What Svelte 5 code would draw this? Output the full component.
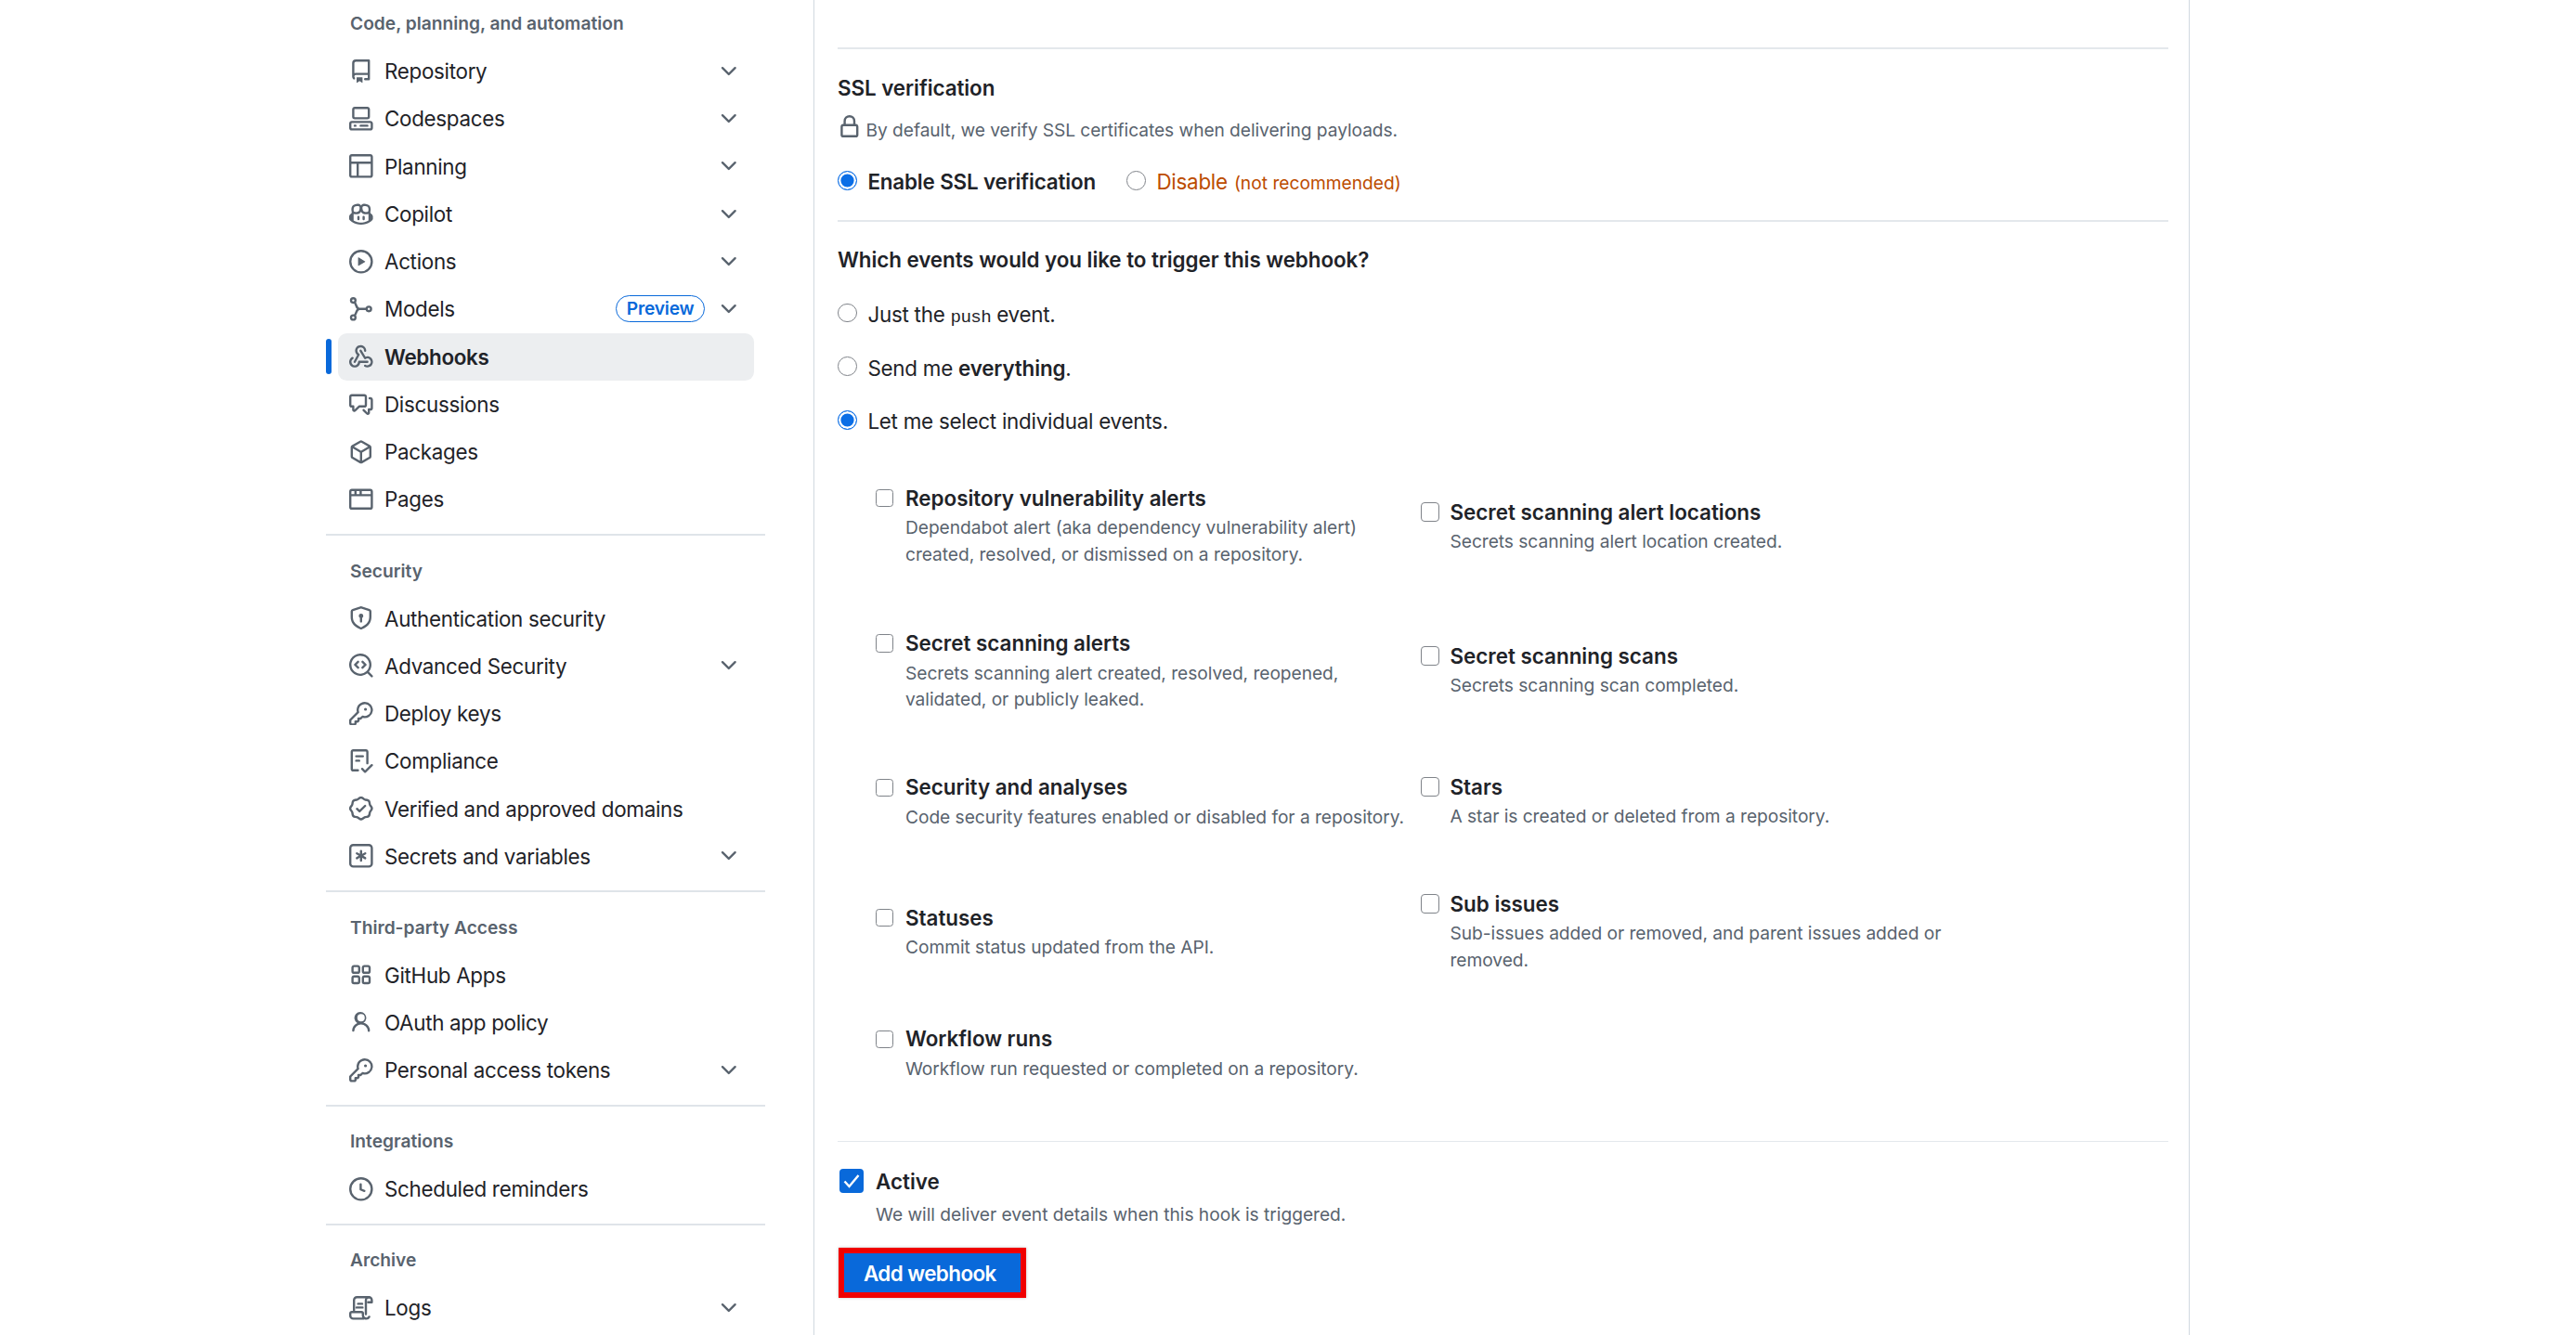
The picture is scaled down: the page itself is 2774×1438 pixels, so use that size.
<script>
  const chevron = 'M12.78 5.22a.749.749 0 0 1 0 1.06l-4.25 4.25a.749.749 0 0 1-1.06 0L3.22 6.28a.749.749 0 1 1 1.06-1.06L8 8.939l3.72-3.719a.749.749 0 0 1 1.06 0Z';
  const key = 'M10.5 0a5.499 5.499 0 1 1-1.288 10.848l-.932.932a.749.749 0 0 1-.53.22H7v.75a.749.749 0 0 1-.22.53l-.5.5a.749.749 0 0 1-.53.22H5v.75a.749.749 0 0 1-.22.53l-.5.5a.749.749 0 0 1-.53.22h-2A1.75 1.75 0 0 1 0 14.25v-2c0-.199.079-.389.22-.53l4.932-4.932A5.5 5.5 0 0 1 10.5 0Zm-4 5.5c-.001.431.069.86.205 1.269a.75.75 0 0 1-.181.768L1.5 12.56v1.69c0 .138.112.25.25.25h1.69l.06-.06v-1.19a.75.75 0 0 1 .75-.75h1.19l.06-.06v-1.19a.75.75 0 0 1 .75-.75h1.19l1.023-1.025a.75.75 0 0 1 .768-.18A4 4 0 1 0 6.5 5.5ZM11 6a1 1 0 1 1 0-2 1 1 0 0 1 0 2Z';
  const lock = 'M4 4a4 4 0 0 1 8 0v2h.25c.966 0 1.75.784 1.75 1.75v5.5A1.75 1.75 0 0 1 12.25 15h-8.5A1.75 1.75 0 0 1 2 13.25v-5.5C2 6.784 2.784 6 3.75 6H4Zm8.25 3.5h-8.5a.25.25 0 0 0-.25.25v5.5c0 .138.112.25.25.25h8.5a.25.25 0 0 0 .25-.25v-5.5a.25.25 0 0 0-.25-.25ZM10.5 6V4a2.5 2.5 0 1 0-5 0v2Z';

  const icons = {
    repo: 'M2 2.5A2.5 2.5 0 0 1 4.5 0h8.75a.75.75 0 0 1 .75.75v12.5a.75.75 0 0 1-.75.75h-2.5a.75.75 0 0 1 0-1.5h1.75v-2h-8a1 1 0 0 0-.714 1.7.75.75 0 1 1-1.072 1.05A2.495 2.495 0 0 1 2 11.5Zm10.5-1h-8a1 1 0 0 0-1 1v6.708A2.486 2.486 0 0 1 4.5 9h8ZM5 12.25a.25.25 0 0 1 .25-.25h3.5a.25.25 0 0 1 .25.25v3.25a.25.25 0 0 1-.4.2l-1.45-1.087a.249.249 0 0 0-.3 0L5.4 15.7a.25.25 0 0 1-.4-.2Z',
    codespaces: 'M0 11.25c0-.966.784-1.75 1.75-1.75h12.5c.966 0 1.75.784 1.75 1.75v3A1.75 1.75 0 0 1 14.25 16H1.75A1.75 1.75 0 0 1 0 14.25Zm2-9.5C2 .784 2.784 0 3.75 0h8.5C13.216 0 14 .784 14 1.75v5a1.75 1.75 0 0 1-1.75 1.75h-8.5A1.75 1.75 0 0 1 2 6.75Zm1.75-.25a.25.25 0 0 0-.25.25v5c0 .138.112.25.25.25h8.5a.25.25 0 0 0 .25-.25v-5a.25.25 0 0 0-.25-.25Zm-2 9.5a.25.25 0 0 0-.25.25v3c0 .138.112.25.25.25h12.5a.25.25 0 0 0 .25-.25v-3a.25.25 0 0 0-.25-.25ZM7 12.75a.75.75 0 0 1 .75-.75h4.5a.75.75 0 0 1 0 1.5h-4.5a.75.75 0 0 1-.75-.75Zm-4 0a.75.75 0 0 1 .75-.75h.5a.75.75 0 0 1 0 1.5h-.5a.75.75 0 0 1-.75-.75Z',
    table: 'M0 1.75C0 .784.784 0 1.75 0h12.5C15.217 0 16 .784 16 1.75v12.5A1.75 1.75 0 0 1 14.25 16H1.75A1.75 1.75 0 0 1 0 14.25ZM6.5 6.5v8h7.75a.25.25 0 0 0 .25-.25V6.5Zm8-1.5V1.75a.25.25 0 0 0-.25-.25H1.75a.25.25 0 0 0-.25.25V5Zm-13 1.5v7.75c0 .138.112.25.25.25H5v-8Z',
    copilot: 'M7.998 15.035c-4.562 0-7.873-2.914-7.998-3.749V9.338c.085-.628.677-1.686 1.588-2.065.013-.07.024-.143.036-.218.029-.183.06-.384.126-.612-.201-.508-.254-1.084-.254-1.656 0-.87.128-1.769.693-2.484.579-.733 1.494-1.124 2.724-1.261 1.206-.134 2.262.034 2.944.765.05.053.096.108.139.165.044-.057.094-.112.143-.165.682-.731 1.738-.899 2.944-.765 1.23.137 2.145.528 2.724 1.261.566.715.693 1.614.693 2.484 0 .572-.053 1.148-.254 1.656.066.228.098.429.126.612.012.076.024.148.037.218.924.385 1.522 1.471 1.591 2.095v1.872c0 .766-3.351 3.795-8.002 3.795Zm0-1.485c2.28 0 4.584-1.11 5.002-1.433V7.862l-.023-.116c-.49.21-1.075.291-1.727.291-1.146 0-2.059-.327-2.71-.991A3.222 3.222 0 0 1 8 6.303a3.24 3.24 0 0 1-.544.743c-.65.664-1.563.991-2.71.991-.652 0-1.236-.081-1.727-.291l-.023.116v4.255c.419.323 2.722 1.433 5.002 1.433ZM6.762 2.83c-.193-.206-.637-.413-1.682-.297-1.019.113-1.479.404-1.713.7-.247.312-.369.789-.369 1.554 0 .793.129 1.171.308 1.371.162.181.519.379 1.442.379.853 0 1.339-.235 1.638-.54.315-.322.527-.827.617-1.553.117-.935-.037-1.395-.241-1.614Zm4.155-.297c-1.044-.116-1.488.091-1.681.297-.204.219-.359.679-.242 1.614.091.726.303 1.231.618 1.553.299.305.784.54 1.638.54.922 0 1.28-.198 1.442-.379.179-.2.308-.578.308-1.371 0-.765-.123-1.242-.37-1.554-.233-.296-.693-.587-1.713-.7ZM6.25 9.037a.75.75 0 0 1 .75.75v1.501a.75.75 0 0 1-1.5 0V9.787a.75.75 0 0 1 .75-.75Zm4.25.75v1.501a.75.75 0 0 1-1.5 0V9.787a.75.75 0 0 1 1.5 0Z',
    play: 'M8 0a8 8 0 1 1 0 16A8 8 0 0 1 8 0ZM1.5 8a6.5 6.5 0 1 0 13 0 6.5 6.5 0 0 0-13 0Zm4.879-2.773 4.264 2.559a.25.25 0 0 1 0 .428l-4.264 2.559A.25.25 0 0 1 6 10.559V5.442a.25.25 0 0 1 .379-.215Z',
    webhook: 'M5.5 4.25a2.25 2.25 0 0 1 4.5 0 .75.75 0 0 0 1.5 0 3.75 3.75 0 1 0-6.14 2.889l-2.272 4.258a.75.75 0 0 0 1.324.706L7 7.25a.75.75 0 0 0-.309-1.015A2.25 2.25 0 0 1 5.5 4.25ZM7.364 3.607a.75.75 0 0 1 1.03.257l2.608 4.349a3.75 3.75 0 1 1-.628 6.785.75.75 0 0 1 .752-1.299 2.25 2.25 0 1 0-.033-3.88.75.75 0 0 1-1.03-.256L7.107 4.636a.75.75 0 0 1 .257-1.03ZM2.9 8.776A.75.75 0 0 1 2.625 9.8 2.25 2.25 0 1 0 6 11.75a.75.75 0 0 1 .75-.751h5.5a.75.75 0 0 1 0 1.5H7.425a3.751 3.751 0 1 1-5.55-3.998.75.75 0 0 1 1.024.274Z',
    discussion: 'M1.75 1h8.5c.966 0 1.75.784 1.75 1.75v5.5A1.75 1.75 0 0 1 10.25 10H7.061l-2.574 2.573A1.458 1.458 0 0 1 2 11.543V10h-.25A1.75 1.75 0 0 1 0 8.25v-5.5C0 1.784.784 1 1.75 1ZM1.5 2.75v5.5c0 .138.112.25.25.25h1a.75.75 0 0 1 .75.75v2.19l2.72-2.72a.749.749 0 0 1 .53-.22h3.5a.25.25 0 0 0 .25-.25v-5.5a.25.25 0 0 0-.25-.25h-8.5a.25.25 0 0 0-.25.25Zm13 2a.25.25 0 0 0-.25-.25h-.5a.75.75 0 0 1 0-1.5h.5c.966 0 1.75.784 1.75 1.75v5.5A1.75 1.75 0 0 1 14.25 12H14v1.543a1.458 1.458 0 0 1-2.487 1.03L9.22 12.28a.749.749 0 0 1 .326-1.275.749.749 0 0 1 .734.215l2.22 2.22v-2.19a.75.75 0 0 1 .75-.75h1a.25.25 0 0 0 .25-.25Z',
    pkg: 'm8.878.392 5.25 3.045c.54.314.872.89.872 1.514v6.098a1.75 1.75 0 0 1-.872 1.514l-5.25 3.045a1.75 1.75 0 0 1-1.756 0l-5.25-3.045A1.75 1.75 0 0 1 1 11.049V4.951c0-.624.332-1.201.872-1.514L7.122.392a1.75 1.75 0 0 1 1.756 0ZM7.875 1.69l-4.63 2.685L8 7.133l4.755-2.758-4.63-2.685a.248.248 0 0 0-.25 0ZM2.5 5.677v5.372c0 .09.047.171.125.216l4.625 2.683V8.432Zm6.25 8.271 4.625-2.683a.25.25 0 0 0 .125-.216V5.677L8.75 8.432Z',
    browser: 'M0 2.75C0 1.784.784 1 1.75 1h12.5c.966 0 1.75.784 1.75 1.75v10.5A1.75 1.75 0 0 1 14.25 15H1.75A1.75 1.75 0 0 1 0 13.25ZM14.5 6h-13v7.25c0 .138.112.25.25.25h12.5a.25.25 0 0 0 .25-.25Zm-6-3.5v2h6V2.75a.25.25 0 0 0-.25-.25ZM5 2.5v2h2v-2Zm-3.25 0a.25.25 0 0 0-.25.25V4.5h2v-2Z',
    shield: 'm8.533.133 5.25 1.68A1.75 1.75 0 0 1 15 3.48V7c0 1.566-.32 3.182-1.303 4.682-.983 1.498-2.585 2.813-5.032 3.855a1.697 1.697 0 0 1-1.33 0c-2.447-1.042-4.049-2.357-5.032-3.855C1.32 10.182 1 8.566 1 7V3.48a1.75 1.75 0 0 1 1.217-1.667l5.25-1.68a1.748 1.748 0 0 1 1.066 0Zm-.61 1.429.001.001-5.25 1.68a.251.251 0 0 0-.174.237V7c0 1.36.275 2.666 1.057 3.859.784 1.194 2.121 2.342 4.366 3.298a.196.196 0 0 0 .154 0c2.245-.957 3.582-2.103 4.366-3.297C13.225 9.666 13.5 8.358 13.5 7V3.48a.25.25 0 0 0-.174-.238l-5.25-1.68a.25.25 0 0 0-.153 0ZM9.5 6.5c0 .536-.286 1.032-.75 1.3v2.45a.75.75 0 0 1-1.5 0V7.8A1.5 1.5 0 1 1 9.5 6.5Z',
    codescan: 'M8.47 4.97a.75.75 0 0 0 0 1.06L9.94 7.5 8.47 8.97a.75.75 0 1 0 1.06 1.06l2-2a.75.75 0 0 0 0-1.06l-2-2a.75.75 0 0 0-1.06 0ZM6.53 6.03a.75.75 0 0 0-1.06-1.06l-2 2a.75.75 0 0 0 0 1.06l2 2a.75.75 0 1 0 1.06-1.06L5.06 7.5l1.47-1.47ZM12.246 13.307a7.501 7.501 0 1 1 1.06-1.06l2.474 2.473a.749.749 0 0 1-.326 1.275.749.749 0 0 1-.734-.215ZM1.5 7.5a6.002 6.002 0 0 0 3.608 5.504 6.002 6.002 0 0 0 6.486-1.117.748.748 0 0 1 .292-.293A6 6 0 1 0 1.5 7.5Z',
    key,
    checklist: 'M2.5 1.75v11.5c0 .138.112.25.25.25h3.17a.75.75 0 0 1 0 1.5H2.75A1.75 1.75 0 0 1 1 13.25V1.75C1 .784 1.784 0 2.75 0h8.5C12.216 0 13 .784 13 1.75v7.736a.75.75 0 0 1-1.5 0V1.75a.25.25 0 0 0-.25-.25h-8.5a.25.25 0 0 0-.25.25Zm13.274 9.537v-.001l-4.557 4.45a.75.75 0 0 1-1.055-.008l-1.943-1.95a.75.75 0 0 1 1.062-1.058l1.419 1.425 4.026-3.932a.75.75 0 1 1 1.048 1.074ZM4.75 4h4.5a.75.75 0 0 1 0 1.5h-4.5a.75.75 0 0 1 0-1.5ZM4 7.75A.75.75 0 0 1 4.75 7h2a.75.75 0 0 1 0 1.5h-2A.75.75 0 0 1 4 7.75Z',
    verified: 'm9.585.52.929.68c.153.112.331.186.518.215l1.138.175a2.678 2.678 0 0 1 2.24 2.24l.174 1.139c.029.187.103.365.215.518l.68.928a2.677 2.677 0 0 1 0 3.17l-.68.928a1.174 1.174 0 0 0-.215.518l-.175 1.138a2.678 2.678 0 0 1-2.241 2.241l-1.138.175a1.17 1.17 0 0 0-.518.215l-.928.68a2.677 2.677 0 0 1-3.17 0l-.928-.68a1.174 1.174 0 0 0-.518-.215L3.83 14.41a2.678 2.678 0 0 1-2.24-2.24l-.175-1.138a1.17 1.17 0 0 0-.215-.518l-.68-.928a2.677 2.677 0 0 1 0-3.17l.68-.928c.112-.153.186-.331.215-.518l.175-1.14a2.678 2.678 0 0 1 2.24-2.24l1.139-.175c.187-.029.365-.103.518-.215l.928-.68a2.677 2.677 0 0 1 3.17 0ZM7.303 1.728l-.927.68a2.67 2.67 0 0 1-1.18.489l-1.137.174a1.179 1.179 0 0 0-.987.987l-.174 1.136a2.677 2.677 0 0 1-.489 1.18l-.68.928a1.18 1.18 0 0 0 0 1.394l.68.927c.256.348.424.753.489 1.18l.174 1.137c.078.509.478.909.987.987l1.136.174a2.67 2.67 0 0 1 1.18.489l.928.68c.414.305.979.305 1.394 0l.927-.68a2.67 2.67 0 0 1 1.18-.489l1.137-.174a1.18 1.18 0 0 0 .987-.987l.174-1.136a2.67 2.67 0 0 1 .489-1.18l.68-.928a1.176 1.176 0 0 0 0-1.394l-.68-.927a2.686 2.686 0 0 1-.489-1.18l-.174-1.137a1.179 1.179 0 0 0-.987-.987l-1.136-.174a2.677 2.677 0 0 1-1.18-.489l-.928-.68a1.176 1.176 0 0 0-1.394 0ZM11.28 6.78l-3.75 3.75a.75.75 0 0 1-1.06 0L4.72 8.78a.751.751 0 0 1 .018-1.042.751.751 0 0 1 1.042-.018L7 8.94l3.22-3.22a.751.751 0 0 1 1.042.018.751.751 0 0 1 .018 1.042Z',
    asterisk: 'M0 2.75A2.75 2.75 0 0 1 2.75 0h10.5A2.75 2.75 0 0 1 16 2.75v10.5A2.75 2.75 0 0 1 13.25 16H2.75A2.75 2.75 0 0 1 0 13.25ZM2.75 1.5c-.69 0-1.25.56-1.25 1.25v10.5c0 .69.56 1.25 1.25 1.25h10.5c.69 0 1.25-.56 1.25-1.25V2.75c0-.69-.56-1.25-1.25-1.25ZM8 4a.75.75 0 0 1 .75.75V6.7l1.69-.975a.75.75 0 0 1 .75 1.3L9.5 8l1.69.976a.75.75 0 0 1-.75 1.298L8.75 9.3v1.951a.75.75 0 0 1-1.5 0V9.299l-1.69.976a.75.75 0 0 1-.75-1.3L6.5 8l-1.69-.975a.75.75 0 0 1 .75-1.3l1.69.976V4.75A.75.75 0 0 1 8 4Z',
    apps: 'M1.5 3.25c0-.966.784-1.75 1.75-1.75h2.5c.966 0 1.75.784 1.75 1.75v2.5A1.75 1.75 0 0 1 5.75 7.5h-2.5A1.75 1.75 0 0 1 1.5 5.75Zm7 0c0-.966.784-1.75 1.75-1.75h2.5c.966 0 1.75.784 1.75 1.75v2.5a1.75 1.75 0 0 1-1.75 1.75h-2.5A1.75 1.75 0 0 1 8.5 5.75Zm-7 7c0-.966.784-1.75 1.75-1.75h2.5c.966 0 1.75.784 1.75 1.75v2.5a1.75 1.75 0 0 1-1.75 1.75h-2.5a1.75 1.75 0 0 1-1.75-1.75Zm7 0c0-.966.784-1.75 1.75-1.75h2.5c.966 0 1.75.784 1.75 1.75v2.5a1.75 1.75 0 0 1-1.75 1.75h-2.5a1.75 1.75 0 0 1-1.75-1.75ZM3.25 3a.25.25 0 0 0-.25.25v2.5c0 .138.112.25.25.25h2.5A.25.25 0 0 0 6 5.75v-2.5A.25.25 0 0 0 5.75 3Zm7 0a.25.25 0 0 0-.25.25v2.5c0 .138.112.25.25.25h2.5a.25.25 0 0 0 .25-.25v-2.5a.25.25 0 0 0-.25-.25Zm-7 7a.25.25 0 0 0-.25.25v2.5c0 .138.112.25.25.25h2.5a.25.25 0 0 0 .25-.25v-2.5a.25.25 0 0 0-.25-.25Zm7 0a.25.25 0 0 0-.25.25v2.5c0 .138.112.25.25.25h2.5a.25.25 0 0 0 .25-.25v-2.5a.25.25 0 0 0-.25-.25Z',
    person: 'M10.561 8.073a6.005 6.005 0 0 1 3.432 5.142.75.75 0 1 1-1.498.07 4.5 4.5 0 0 0-8.99 0 .75.75 0 0 1-1.498-.07 6.004 6.004 0 0 1 3.431-5.142 3.999 3.999 0 1 1 4.123 0ZM10.5 4.5a2.5 2.5 0 1 0-5 0 2.5 2.5 0 0 0 5 0Z',
    clock: 'M8 0a8 8 0 1 1 0 16A8 8 0 0 1 8 0ZM1.5 8a6.5 6.5 0 1 0 13 0 6.5 6.5 0 0 0-13 0Zm7-3.25v2.992l2.028.812a.75.75 0 0 1-.557 1.392l-2.5-1A.751.751 0 0 1 7 8.25v-3.5a.75.75 0 0 1 1.5 0Z',
  };

  const groups = [
    { title: 'Code, planning, and automation', items: [
      { label: 'Repository', icon: 'repo', more: true },
      { label: 'Codespaces', icon: 'codespaces', more: true },
      { label: 'Planning', icon: 'table', more: true },
      { label: 'Copilot', icon: 'copilot', more: true },
      { label: 'Actions', icon: 'play', more: true },
      { label: 'Models', icon: 'models', more: true, preview: true },
      { label: 'Webhooks', icon: 'webhook', active: true },
      { label: 'Discussions', icon: 'discussion' },
      { label: 'Packages', icon: 'pkg' },
      { label: 'Pages', icon: 'browser' },
    ] },
    { title: 'Security', items: [
      { label: 'Authentication security', icon: 'shield' },
      { label: 'Advanced Security', icon: 'codescan', more: true },
      { label: 'Deploy keys', icon: 'key' },
      { label: 'Compliance', icon: 'checklist' },
      { label: 'Verified and approved domains', icon: 'verified' },
      { label: 'Secrets and variables', icon: 'asterisk', more: true },
    ] },
    { title: 'Third-party Access', items: [
      { label: 'GitHub Apps', icon: 'apps' },
      { label: 'OAuth app policy', icon: 'person' },
      { label: 'Personal access tokens', icon: 'key', more: true },
    ] },
    { title: 'Integrations', items: [
      { label: 'Scheduled reminders', icon: 'clock' },
    ] },
    { title: 'Archive', items: [
      { label: 'Logs', icon: 'log', more: true },
    ] },
  ];

  const leftEvents = [
    { top: 0, title: 'Repository vulnerability alerts', desc: 'Dependabot alert (aka dependency vulnerability alert)\ncreated, resolved, or dismissed on a repository.' },
    { top: 65, title: 'Secret scanning alerts', desc: 'Secrets scanning alert created, resolved, reopened,\nvalidated, or publicly leaked.' },
    { top: 64, title: 'Security and analyses', desc: 'Code security features enabled or disabled for a repository.' },
    { top: 78, title: 'Statuses', desc: 'Commit status updated from the API.' },
    { top: 68.6, title: 'Workflow runs', desc: 'Workflow run requested or completed on a repository.' },
  ];

  const rightEvents = [
    { top: 15, title: 'Secret scanning alert locations', desc: 'Secrets scanning alert location created.' },
    { top: 92.6, title: 'Secret scanning scans', desc: 'Secrets scanning scan completed.' },
    { top: 78.6, title: 'Stars', desc: 'A star is created or deleted from a repository.' },
    { top: 63.6, title: 'Sub issues', desc: 'Sub-issues added or removed, and parent issues added or\nremoved.' },
  ];
</script>

{#snippet octicon(d)}
  <svg class="octicon" viewBox="0 0 16 16" fill="currentColor" aria-hidden="true"><path {d} /></svg>
{/snippet}

{#snippet navIcon(name)}
  {#if name === 'models'}
    <svg class="octicon" viewBox="0 0 16 16" fill="none" stroke="currentColor" stroke-width="1.5" aria-hidden="true">
      <circle cx="2.75" cy="2.25" r="1.5" />
      <circle cx="2.75" cy="13.75" r="1.5" />
      <circle cx="13.25" cy="8" r="1.5" />
      <path d="M3.6 3.5c1.6 1.7 1 4.5 3.4 4.5h4.7M3.6 12.5c1.6-1.7 1-4.5 3.4-4.5" />
    </svg>
  {:else if name === 'log'}
    <svg class="octicon" viewBox="0 0 16 16" fill="none" stroke="currentColor" stroke-width="1.5" stroke-linecap="round" stroke-linejoin="round" aria-hidden="true">
      <path d="M3.25 9.5V2.75a2 2 0 0 1 2-2h8a2 2 0 0 1 2 2v1.5h-2.5" />
      <path d="M13.25.75a2 2 0 0 0-2 2v9.5" />
      <path d="M9.5 15.25H2.75a2 2 0 0 1-2-2v-1.5a1 1 0 0 1 1-1h6.5a1 1 0 0 1 1 1v1.25a2.25 2.25 0 0 0 4.25 1" />
      <path d="M6 5.25h2.75M5 7.75h4" />
    </svg>
  {:else}
    {@render octicon(icons[name])}
  {/if}
{/snippet}

{#snippet eventList(events)}
  {#each events as ev}
    <label class="event" style:margin-top="{ev.top}px">
      <input type="checkbox" />
      <span class="event-text">
        <strong>{ev.title}</strong>
        <span class="event-desc">{ev.desc}</span>
      </span>
    </label>
  {/each}
{/snippet}

<div class="page">
  <nav class="sidebar">
    {#each groups as group, g}
      {#if g > 0}<hr class="nav-sep" />{/if}
      <h2>{group.title}</h2>
      <ul>
        {#each group.items as item}
          <li class:active={item.active}>
            {#if item.active}<span class="marker"></span>{/if}
            <span class="nav-icon">{@render navIcon(item.icon)}</span>
            <span class="nav-label">{item.label}</span>
            {#if item.preview}<span class="badge">Preview</span>{/if}
            {#if item.more}<span class="nav-icon chevron">{@render octicon(chevron)}</span>{/if}
          </li>
        {/each}
      </ul>
    {/each}
  </nav>

  <main>
    <hr />
    <h3 class="ssl-title">SSL verification</h3>
    <p class="note">
      <span class="lock">{@render octicon(lock)}</span>
      By default, we verify SSL certificates when delivering payloads.
    </p>
    <div class="ssl-options">
      <label class="radio"><input type="radio" name="ssl" checked /><strong>Enable SSL verification</strong></label>
      <label class="radio danger"><input type="radio" name="ssl" /><span>Disable <small>(not recommended)</small></span></label>
    </div>
    <hr class="second" />
    <h3 class="events-title">Which events would you like to trigger this webhook?</h3>
    <div class="trigger">
      <label class="radio"><input type="radio" name="trigger" /><span>Just the <code>push</code> event.</span></label>
      <label class="radio"><input type="radio" name="trigger" /><span>Send me <strong>everything</strong>.</span></label>
      <label class="radio"><input type="radio" name="trigger" checked /><span>Let me select individual events.</span></label>
    </div>
    <div class="events">
      <div class="col">{@render eventList(leftEvents)}</div>
      <div class="col">{@render eventList(rightEvents)}</div>
    </div>
    <hr class="third" />
    <label class="active-box">
      <input type="checkbox" checked />
      <strong>Active</strong>
    </label>
    <p class="active-note">We will deliver event details when this hook is triggered.</p>
    <button type="button">Add webhook</button>
  </main>
</div>

<style>
  :global(body) {
    background: #fff;
    font-family: Inter, "Liberation Sans", sans-serif;
    color: #1f2328;
  }

  .page {
    display: flex;
    height: 1438px;
    overflow: hidden;
    padding-left: 351px;
    font-size: 22.4px;
  }

  .sidebar {
    width: 473px;
    flex: none;
    margin-right: 52px;
    padding-top: 11.3px;
  }

  h2 {
    margin: 0 0 11px 26px;
    font-size: 19.2px;
    line-height: 28.8px;
    font-weight: 600;
    color: #59636e;
  }

  ul {
    list-style: none;
    margin: 0;
    padding: 0;
  }

  li {
    position: relative;
    display: flex;
    align-items: center;
    height: 51.25px;
    margin-left: 13px;
    width: 448px;
    box-sizing: border-box;
    padding: 0 14px 0 12.4px;
    gap: 12px;
    border-radius: 9.6px;
    letter-spacing: -0.3px;
  }

  li.active {
    background: #eceef0;
    font-weight: 600;
  }

  .marker {
    position: absolute;
    left: -13px;
    top: 6.5px;
    width: 6px;
    height: 38px;
    border-radius: 3px;
    background: #0969da;
  }

  .nav-icon {
    display: flex;
    color: #59636e;
  }

  .nav-label {
    flex: 1;
  }

  .octicon {
    width: 25.6px;
    height: 25.6px;
    display: block;
  }

  .badge {
    border: 1.6px solid #0969da;
    border-radius: 16px;
    color: #0969da;
    font-size: 19.2px;
    font-weight: 600;
    line-height: 27px;
    padding: 0 11px;
    margin-right: 1px;
    letter-spacing: -0.2px;
  }

  .nav-sep {
    margin: 11.6px 0 23.8px;
    border: 0;
    height: 1.6px;
    background: #dfe4e9;
  }

  main {
    width: 1482px;
    flex: none;
    box-sizing: border-box;
    border-left: 1.6px solid #d1d9e0;
    border-right: 1.6px solid #d1d9e0;
    padding: 51px 22px 0 25px;
  }

  main hr {
    border: 0;
    height: 1.6px;
    background: #e4e8ec;
    margin: 0;
  }

  h3 {
    margin: 0;
    font-size: 22.4px;
    line-height: 32px;
    font-weight: 600;
    letter-spacing: -0.06px;
  }

  .ssl-title {
    margin-top: 26.2px;
  }

  .note {
    margin: 14px 0 0;
    display: flex;
    align-items: center;
    gap: 5px;
    font-size: 19.2px;
    line-height: 30px;
    color: #59636e;
    letter-spacing: -0.07px;
  }

  .lock {
    display: flex;
    margin-top: -6px;
  }

  .ssl-options {
    display: flex;
    gap: 33px;
    margin-top: 24.9px;
  }

  .radio {
    display: flex;
    align-items: center;
    height: 32px;
    letter-spacing: -0.25px;
  }

  .radio strong {
    font-weight: 600;
    letter-spacing: -0.15px;
  }

  .radio input {
    appearance: none;
    box-sizing: border-box;
    width: 20.8px;
    height: 20.8px;
    margin: -3px 11.2px 0 0.4px;
    border: 1.6px solid #7f8389;
    border-radius: 50%;
    background: #fff;
  }

  .radio input:checked {
    border-color: #0b6ee6;
    background: #0b6ee6;
    box-shadow: inset 0 0 0 2.4px #fff;
  }

  .danger {
    color: #bc4c00;
  }

  .danger small {
    font-size: 19.2px;
    letter-spacing: 0;
    margin-left: 1px;
  }

  .second {
    margin-top: 25.4px !important;
  }

  .events-title {
    margin-top: 25.4px;
  }

  .trigger {
    display: flex;
    flex-direction: column;
    gap: 25.6px;
    margin-top: 26.5px;
  }

  code {
    font-family: "Liberation Mono", monospace;
    font-size: 19.2px;
    letter-spacing: -0.6px;
  }

  .events {
    display: flex;
    padding-left: 41px;
    margin-top: 51px;
  }

  .col {
    width: 586.5px;
    flex: none;
  }

  .event {
    display: flex;
    gap: 12.8px;
  }

  .event input {
    appearance: none;
    box-sizing: border-box;
    flex: none;
    width: 19.2px;
    height: 19.2px;
    margin: 6.4px 0 0;
    border: 1.6px solid #7f8389;
    border-radius: 3.5px;
    background: #fff;
  }

  .col + .col input {
    width: 20.8px;
    height: 20.8px;
    margin: 5.6px -1.6px 0 0;
    border-radius: 4px;
  }

  .event-text {
    display: flex;
    flex-direction: column;
  }

  .event-text strong {
    line-height: 32px;
    font-weight: 600;
  }

  .event-desc {
    margin-top: 1.6px;
    font-size: 19.2px;
    line-height: 28.8px;
    color: #59636e;
    white-space: pre-line;
    letter-spacing: -0.05px;
  }

  .third {
    margin-top: 62.9px !important;
  }

  .active-box {
    display: flex;
    align-items: center;
    gap: 13px;
    margin-top: 26.1px;
    height: 32px;
    font-weight: 600;
  }

  .active-box input {
    appearance: none;
    box-sizing: border-box;
    width: 26px;
    height: 26px;
    margin: 0 0 0 2px;
    border-radius: 4px;
    background: #0969da url("data:image/svg+xml,%3Csvg xmlns='http://www.w3.org/2000/svg' viewBox='0 0 26 26'%3E%3Cpath d='M5.5 13.5l5 5.5 10-12' fill='none' stroke='%23fff' stroke-width='2.4'/%3E%3C/svg%3E") center / 100% no-repeat;
  }

  .active-box strong {
    font-weight: 600;
  }

  .active-note {
    margin: 5.2px 0 0 41px;
    font-size: 19.2px;
    line-height: 28.8px;
    color: #59636e;
    letter-spacing: -0.03px;
  }

  button {
    display: block;
    margin: 21.9px 0 0 1.4px;
    width: 202px;
    height: 54px;
    box-sizing: border-box;
    border: 6px solid #f00000;
    border-radius: 0;
    padding: 0 6px 0 0;
    background: #0969da;
    color: #fff;
    font: 600 22.4px Inter, "Liberation Sans", sans-serif;
    letter-spacing: -0.55px;
    box-shadow: 0 0 3px rgba(0, 0, 0, 0.25);
  }
</style>
